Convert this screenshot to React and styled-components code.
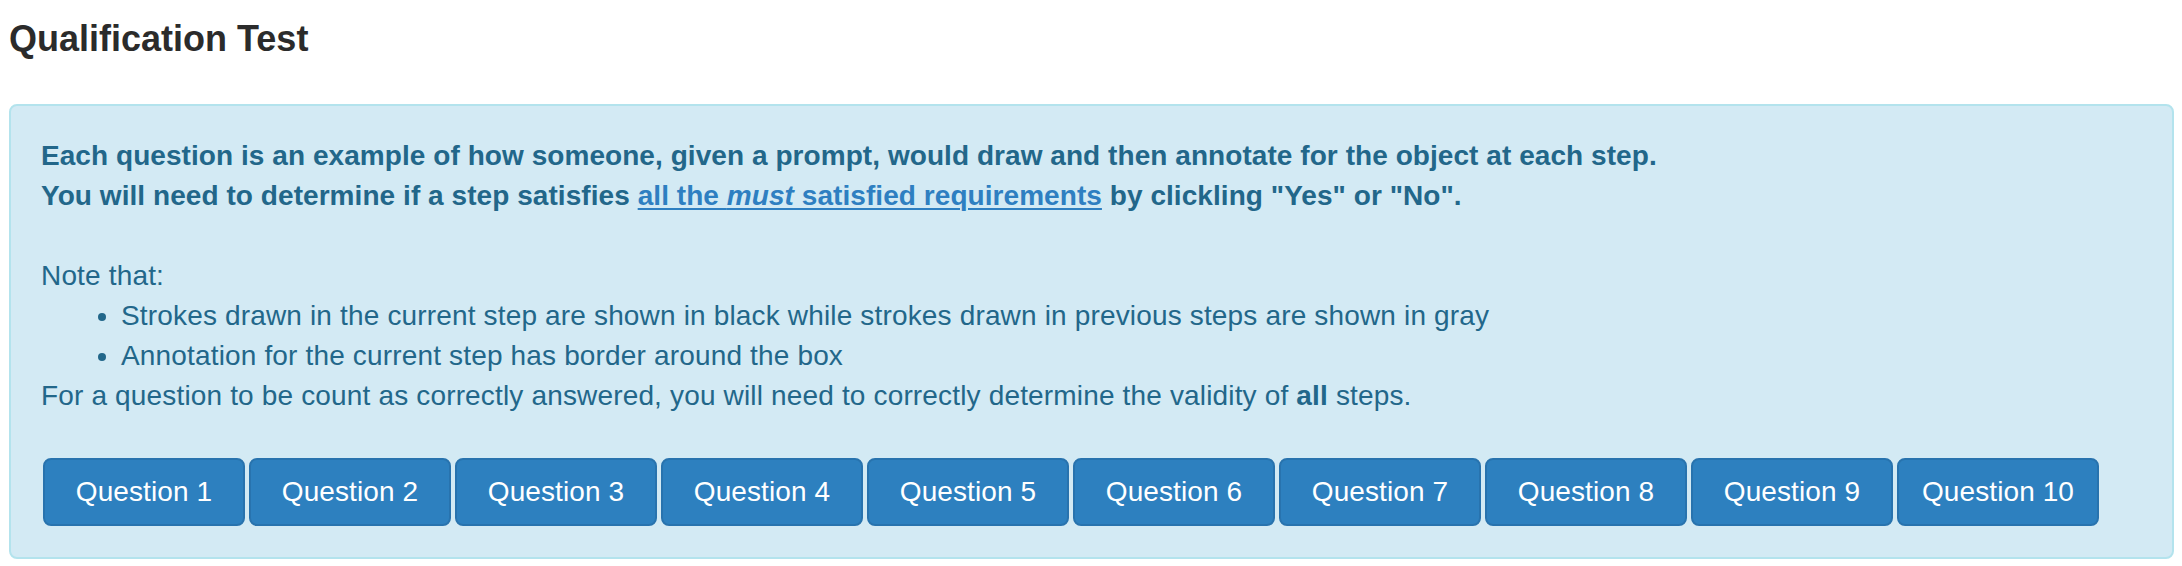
import React from 'react';
import styled, {createGlobalStyle} from "styled-components";

const GlobalStyle = createGlobalStyle`
  body {
    margin: 0;
    background: #ffffff;
    font-family: "Liberation Sans", Arial, Helvetica, sans-serif;
  }
`;

const Page = styled.div`
  padding: 0 8px 0 9px;
`;

const Title = styled.h3`
  margin: 0;
  padding-top: 19px;
  font-size: 36px;
  line-height: 40px;
  font-weight: 700;
  color: #2b2b2b;
  margin-bottom: 45px;
`;

const Alert = styled.div`
  background-color: #d3eaf4;
  border: 2px solid #b3e3ed;
  border-radius: 8px;
  padding: 30px 30px 31px 30px;
  color: #22678a;
  font-size: 28px;
  line-height: 40px;
  letter-spacing: 0.16px;
`;

const Lead = styled.div`
  font-weight: 700;
  letter-spacing: 0.06px;
`;

const Link = styled.a`
  color: #2e7fc1;
  text-decoration: underline;
  text-decoration-thickness: 2px;
  text-underline-offset: 3px;
  cursor: pointer;
`;

const Spacer = styled.div`
  height: 40px;
`;

const List = styled.ul`
  margin: 0;
  padding-left: 80px;
`;

const Buttons = styled.div`
  display: flex;
  gap: 4px;
  margin-top: 42px;
  margin-left: 2px;
`;

const QuestionButton = styled.button`
  width: 202px;
  height: 68px;
  padding: 12px 0;
  background-color: #2d80bf;
  border: 2px solid #2873ae;
  border-radius: 8px;
  color: #ffffff;
  font-family: "Liberation Sans", Arial, Helvetica, sans-serif;
  font-size: 28px;
  line-height: 40px;
  letter-spacing: 0.1px;
  cursor: pointer;
`;

const questions = [1, 2, 3, 4, 5, 6, 7, 8, 9, 10];

export default function App() {
    return (
        <Page>
            <GlobalStyle/>
            <Title>Qualification Test</Title>
            <Alert>
                <Lead>
                    Each question is an example of how someone, given a prompt, would draw and then annotate for the object at each step.
                    <br/>
                    You will need to determine if a step satisfies <Link>all the <i>must</i> satisfied requirements</Link> by clickling "Yes" or "No".
                </Lead>
                <Spacer/>
                <div>Note that:</div>
                <List>
                    <li>Strokes drawn in the current step are shown in black while strokes drawn in previous steps are shown in gray</li>
                    <li>Annotation for the current step has border around the box</li>
                </List>
                <div>For a question to be count as correctly answered, you will need to correctly determine the validity of <b>all</b> steps.</div>
                <Buttons>
                    {questions.map((n) => (
                        <QuestionButton key={n}>Question {n}</QuestionButton>
                    ))}
                </Buttons>
            </Alert>
        </Page>
    );
}
